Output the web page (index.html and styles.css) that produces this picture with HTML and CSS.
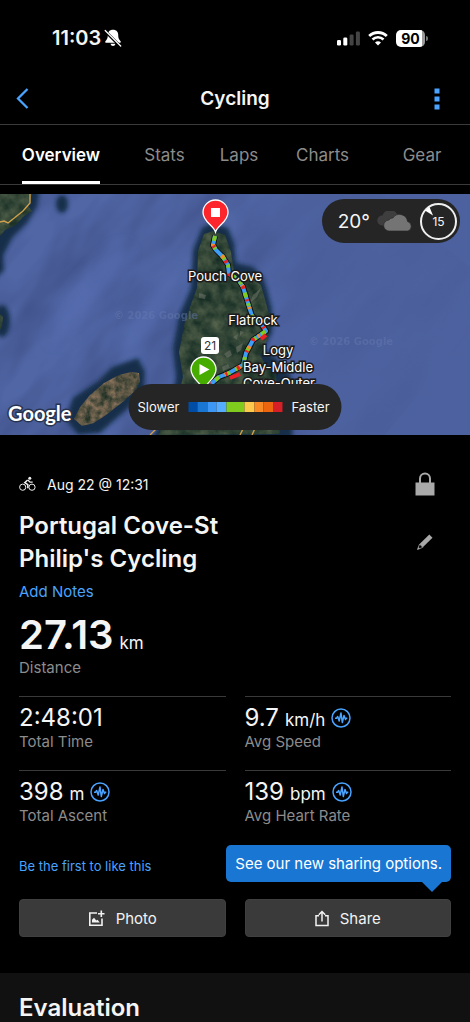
FILE: index.html
```html
<!DOCTYPE html>
<html lang="en">
<head>
  <meta charset="UTF-8">
  <meta name="viewport" content="width=device-width, initial-scale=1.0">
  <title>Cycling</title>
  <link rel="stylesheet" href="styles.css">
</head>
<body>

<div class="status-bar">
  <div class="status-left">
    <span class="clock">11:03</span>
    <svg width="18" height="18" viewBox="0 0 18 18">
      <path d="M9 .8c-3.400 0-5.200 2.200-5.200 5.200 0 3.500-.9 4.600-2.400 6.300-.4.500-.2 1.400.5 1.400h14.200c.7 0 .9-.9.5-1.400-1.500-1.700-2.400-2.800-2.400-6.300 0-3-1.800-5.200-5.200-5.200zM6.600 14.800h4.800c-.2 1.400-1.300 2.200-2.400 2.200s-2.200-.8-2.400-2.200z" fill="#fff"/>
      <path d="M.5 1.500l16 16" stroke="#000" stroke-width="3"/>
      <path d="M1.200 1.500l15.500 15.500" stroke="#fff" stroke-width="1.300" stroke-linecap="round"/>
    </svg>
  </div>
  <div class="status-right">
    <svg width="23" height="15" viewBox="0 0 23 15">
      <rect x="0" y="9" width="4" height="5.500" rx="1.300" fill="#fff"/>
      <rect x="6.300" y="6.500" width="4" height="8" rx="1.300" fill="#fff"/>
      <rect x="12.600" y="3.500" width="4" height="11" rx="1.300" fill="#444"/>
      <rect x="18.900" y="0.500" width="4" height="14" rx="1.300" fill="#444"/>
    </svg>
    <svg width="20" height="15" viewBox="0 0 20 15">
      <path d="M1.200 5.100a12.600 12.600 0 0 1 17.600 0" fill="none" stroke="#fff" stroke-width="2.800"/>
      <path d="M4.500 8.500a7.900 7.900 0 0 1 11 0" fill="none" stroke="#fff" stroke-width="2.600"/>
      <path d="M10 14.600l-3-3a4.300 4.300 0 0 1 6 0z" fill="#fff"/>
    </svg>
    <span class="battery">90</span>
  </div>
</div>

<header class="top-bar">
  <button class="icon-btn" aria-label="Back">
    <svg width="13" height="22" viewBox="0 0 13 22"><path d="M11.500 1L2 10.500l9.500 9.500" fill="none" stroke="#49a3ff" stroke-width="2.300"/></svg>
  </button>
  <h1>Cycling</h1>
  <button class="icon-btn" aria-label="More options">
    <svg width="6" height="22" viewBox="0 0 6 22"><path d="M.5.500h5v5h-5zM.5 8.500h5v5h-5zM.5 16.500h5v5h-5z" fill="#49a3ff"/></svg>
  </button>
</header>

<nav class="tabs">
  <a href="#" class="active">Overview</a>
  <a href="#">Stats</a>
  <a href="#">Laps</a>
  <a href="#">Charts</a>
  <a href="#">Gear</a>
</nav>

<div class="map">
  <svg class="map-image" viewBox="0 0 470 241" preserveAspectRatio="xMidYMid slice">
    <defs>
      <filter id="soft" x="-10%" y="-10%" width="120%" height="120%"><feGaussianBlur stdDeviation="2"/></filter>
      <filter id="swell" x="-50%" y="-50%" width="200%" height="200%"><feGaussianBlur stdDeviation="7"/></filter>
      <filter id="terrain" x="0" y="0" width="100%" height="100%" color-interpolation-filters="sRGB">
        <feTurbulence type="fractalNoise" baseFrequency="0.08" numOctaves="4" seed="7" result="noise"/>
        <feColorMatrix in="noise" type="matrix" values="0.35 0 0 0 0.02  0.3 0 0 0 0.12  0.22 0 0 0 0.1  0 0 0 0 1"/>
        <feComposite in2="SourceGraphic" operator="in"/>
      </filter>
      <filter id="dry" x="0" y="0" width="100%" height="100%" color-interpolation-filters="sRGB">
        <feTurbulence type="fractalNoise" baseFrequency="0.12" numOctaves="4" seed="3" result="noise"/>
        <feColorMatrix in="noise" type="matrix" values="0.8 0 0 0 -0.05  0.5 0 0 0 0.08  0.4 0 0 0 0.06  0 0 0 0 1"/>
        <feComposite in2="SourceGraphic" operator="in"/>
      </filter>
      <filter id="water" x="0" y="0" width="100%" height="100%" color-interpolation-filters="sRGB">
        <feTurbulence type="fractalNoise" baseFrequency="0.012 0.03" numOctaves="3" seed="11"/>
        <feColorMatrix type="matrix" values="0 0 0 0 0.2  0 0 0 0 0.25  0 0 0 0 0.45  0.9 0 0 0 -0.3"/>
      </filter>
      <linearGradient id="calm">
        <stop offset="0" stop-color="#4b609d" stop-opacity="0"/>
        <stop offset=".4" stop-color="#4b609d" stop-opacity=".8"/>
      </linearGradient>
      <path id="route" d="M215 42l-2 9 3 5 7 7 5 8 1 9 9 5 5 8 4 13 5 16 10 9 4 6-13 9-7 13-3 12-14 8-10 4-8 7"/>
    </defs>

    <rect width="470" height="241" fill="#5066a5"/>
    <g transform="rotate(-50 120 120)"><rect x="-100" y="-120" width="480" height="520" filter="url(#water)"/></g>
    <rect x="220" width="250" height="241" fill="url(#calm)"/>
    <g filter="url(#swell)" fill="#566db0" opacity=".7">
      <ellipse cx="90" cy="100" rx="14" ry="60" transform="rotate(38 90 100)"/>
      <ellipse cx="150" cy="120" rx="10" ry="50" transform="rotate(30 150 120)"/>
    </g>

    <!-- shallow water round the coast -->
    <g fill="#132f48" filter="url(#soft)">
      <path d="M-10-10H40L37 12 27 29 12 44 3 62 4 76-10 90z"/>
      <ellipse cx="62" cy="10" rx="6" ry="9"/>
      <ellipse cx="2" cy="127" rx="8" ry="16"/>
      <path d="M66 225l7-21 25-17 14-14 26-9 7 14-1 18-18 20-26 23-22 2z"/>
      <path d="M150 250l22-46 4-20-3-30 6-32 12-28 2-38 9-22 10-5 16 5 6 15 2 20 17 4 10 10 5 16 4 17v22l-8 16 16 14 10 12 4 14-2 56z"/>
    </g>

    <!-- land -->
    <g filter="url(#terrain)">
      <path d="M0 0h32l-4 12 4 5-9 6-7 8-11 5-5 6z"/>
      <path d="M0 120l3 3-1 9-2 4z"/>
      <path d="M158 241l20-38 5-20-4-25 6-31 12-33 1-37 6-17 9-3 12 4 6 17 3 19 15 5 12 9 5 18 4 15-2 20-8 17 6 11 10 10 4 58z"/>
    </g>
    <path d="M74 225l6-12 10-12 14-12 15-8 12-3 8 1 1 8-4 9-12 11-18 14-12 8-12 3z" filter="url(#dry)"/>
    <g fill="#8d8b80" opacity=".4">
      <path d="M224 160l6-4 2 5-5 3zM236 153l7-4-2 7-4 3zM222 173l6-3 2 4-7 3zM199 99l7 2-1 4-6-1zM253 101l8-7-4 9-7 6zM233 143l5-3-1 6zM240 137l4 1-4 4z"/>
    </g>
    <g fill="none" stroke="#d0a04c" stroke-width="1.400">
      <path d="M30 0v9l-7 8-15 12-4-2-4 1"/>
      <path d="M150 241l7-7M240 241l4-8M252 241l4-9"/>
    </g>

    <g class="watermark">
      <text x="114" y="125">© 2026 Google</text>
      <text x="309" y="151">© 2026 Google</text>
    </g>

    <!-- route, coloured by speed -->
    <g fill="none" stroke-linejoin="round">
      <use href="#route" class="pace-edge"/>
      <use href="#route" class="pace pace-base"/>
      <use href="#route" class="pace pace-green"/>
      <use href="#route" class="pace pace-orange"/>
      <use href="#route" class="pace pace-red"/>
      <path d="M266 141l-5 4M240 180l-10 4" stroke="#ee2027" stroke-width="4"/>
    </g>

    <g class="places">
      <text x="225" y="87">Pouch Cove</text>
      <text x="253" y="131">Flatrock</text>
      <text x="278" y="161">Logy</text>
      <text x="278" y="178">Bay-Middle</text>
      <text x="279" y="194">Cove-Outer</text>
    </g>

    <rect x="201" y="143" width="18" height="17" rx="3" fill="#fff"/>
    <text x="210" y="156" class="shield">21</text>

    <path d="M215.500 38c-2-7-12.500-10-12.500-19.500a12.500 12.500 0 0 1 25 0c0 9.500-10.500 12.500-12.500 19.500z" fill="#fc252c" stroke="#fff" stroke-width="1.300"/>
    <rect x="211" y="14" width="9" height="9" fill="#fff"/>
    <path d="M203.500 196c-2-7-12.500-11-12.500-20.500a12.500 12.500 0 0 1 25 0c0 9.500-10.500 13.500-12.500 20.500z" fill="#46ad00" stroke="#fff" stroke-width="1.300"/>
    <path d="M199.500 170v11l10-5.500z" fill="#fff"/>

    <text x="8" y="227" class="google">Google</text>
  </svg>

  <div class="weather">
    <span class="temp">20°</span>
    <svg width="36" height="20" viewBox="0 0 36 20">
      <path d="M5 14.500a5 5 0 0 1 .5-10 8 8 0 0 1 14.800-1L22 14.500z" fill="#3e3e3e"/>
      <path d="M12.500 20a5.500 5.500 0 0 1-.6-11 4.500 4.500 0 0 1 4-2 8 8 0 0 1 14.600 3.500A5 5 0 0 1 31 20z" fill="#747474" stroke="#252525" stroke-width=".6"/>
    </svg>
    <span class="wind">15
      <svg class="wind-arrow" width="9" height="9" viewBox="0 0 9 9"><path d="M0 3.500L4.500 0 8 8.500z" fill="#fff"/></svg>
    </span>
  </div>

  <div class="legend">
    <span>Slower</span>
    <span class="scale"><i></i><i></i><i></i><i></i><i></i><i></i><i></i><i></i><i></i></span>
    <span>Faster</span>
  </div>
</div>

<main class="activity">
  <div class="meta">
    <svg width="17" height="16" viewBox="0 0 17 16" fill="none" stroke="#eee">
      <circle cx="3.700" cy="11.200" r="3.100"/>
      <circle cx="13" cy="11.200" r="3.100"/>
      <circle cx="10.800" cy="2.200" r="1.500" fill="#eee" stroke="none"/>
      <path d="M8.600 4L5.800 6.600l3 2v3.700" stroke-width="1.500"/>
      <path d="M8.800 4l2.300 2.200h2.600" stroke-width="1.300"/>
    </svg>
    <span class="date">Aug 22 @ 12:31</span>
    <button class="icon-btn" aria-label="Privacy">
      <svg width="20" height="24" viewBox="0 0 20 24"><path d="M5 11V6.500a5 5 0 0 1 10 0V11" fill="none" stroke="#a9a9a9" stroke-width="2"/><path d="M.5 10.500h19v13H.5z" fill="#a9a9a9"/></svg>
    </button>
  </div>

  <div class="title-row">
    <h2>Portugal Cove-St Philip's Cycling</h2>
    <button class="icon-btn" aria-label="Edit name">
      <svg width="16" height="16" viewBox="0 0 16 16"><path d="M12.300.5l3.200 3.200-9.700 9.600-3.200-3.200z" fill="#a9a9a9"/><path d="M2.600 10.100L.5 15.500l5.300-2.200z" fill="none" stroke="#a9a9a9" stroke-width=".8"/><path d="M.5 15.500l1-2.600 1.500 1.500z" fill="#a9a9a9"/></svg>
    </button>
  </div>
  <a href="#" class="notes">Add Notes</a>

  <div class="distance">
    <div class="total"><strong>27.13</strong> <small>km</small></div>
    <p>Distance</p>
  </div>

  <div class="stats">
    <div class="stat">
      <div class="value">2:48:01</div>
      <p>Total Time</p>
    </div>
    <div class="stat">
      <div class="value">9.7 <small>km/h</small>
        <svg class="pulse" viewBox="0 0 20 20"><circle cx="10" cy="10" r="9"/><path d="M4 10.200h1.500l1.200-1.700 1.500 4.500 1.800-8 1.300 9.500 1.700-7 1.500 4 .8-1.300h1"/></svg>
      </div>
      <p>Avg Speed</p>
    </div>
    <div class="stat">
      <div class="value">398 <small>m</small>
        <svg class="pulse" viewBox="0 0 20 20"><circle cx="10" cy="10" r="9"/><path d="M4 10.200h1.500l1.200-1.700 1.500 4.500 1.800-8 1.300 9.500 1.700-7 1.500 4 .8-1.300h1"/></svg>
      </div>
      <p>Total Ascent</p>
    </div>
    <div class="stat">
      <div class="value">139 <small>bpm</small>
        <svg class="pulse" viewBox="0 0 20 20"><circle cx="10" cy="10" r="9"/><path d="M4 10.200h1.500l1.200-1.700 1.500 4.500 1.800-8 1.300 9.500 1.700-7 1.500 4 .8-1.300h1"/></svg>
      </div>
      <p>Avg Heart Rate</p>
    </div>
  </div>

  <div class="social">
    <a href="#" class="like">Be the first to like this</a>
    <div class="tooltip">See our new sharing options.</div>
  </div>

  <div class="actions">
    <button>
      <svg width="17" height="17" viewBox="0 0 17 17" fill="none" stroke="#f2f2f2" stroke-width="1.600">
        <path d="M9 3H1.800v12.200H14V8.500"/>
        <path d="M13.300.5v6.400M10 3.700h6.500"/>
        <path d="M4 12.600V9.800l2-2 2.300 2.800 1.200-.8 2.300 2.800z" fill="#f2f2f2" stroke="none"/>
      </svg>
      Photo
    </button>
    <button>
      <svg width="14" height="17" viewBox="0 0 14 17" fill="none" stroke="#f2f2f2" stroke-width="1.500">
        <path d="M4 5.800H1v9.700h12V5.800h-3"/>
        <path d="M7 11.500V2M3.800 4.800L7 1.500l3.200 3.300"/>
      </svg>
      Share
    </button>
  </div>
</main>

<section class="evaluation">
  <h2>Evaluation</h2>
</section>

</body>
</html>
```
FILE: styles.css
```css
* {
  box-sizing: border-box;
}

body {
  margin: 0;
  background-color: #000;
  color: #f5f5f5;
  font-family: Inter, "Liberation Sans", sans-serif;
  font-size: 15px;
}

h1, h2, p {
  margin: 0;
}

h2 {
  font-size: 24px;
  font-weight: 600;
  line-height: 33px;
}

a {
  color: #49a3ff;
  text-decoration: none;
}

svg {
  display: block;
  flex: none;
}

.icon-btn {
  display: flex;
  padding: 0;
  border: none;
  background: none;
  cursor: pointer;
}

/* Status bar */
.status-bar {
  display: flex;
  justify-content: space-between;
  align-items: center;
  height: 76px;
  padding: 0 42px 0 52px;
}

.status-left,
.status-right {
  display: flex;
  align-items: center;
}

.status-left {
  gap: 3px;
}

.status-right {
  gap: 8px;
}

.clock {
  font-size: 20px;
  font-weight: 600;
}

.battery {
  position: relative;
  width: 29px;
  margin-right: 3px;
  border-radius: 5px;
  background: linear-gradient(90deg, #fff 90%, #999 90%);
  color: #000;
  font-size: 14px;
  font-weight: 700;
  line-height: 17px;
  text-align: center;
}

.battery::after {
  content: "";
  position: absolute;
  top: 6px;
  right: -3px;
  width: 2px;
  height: 5px;
  border-radius: 0 2px 2px 0;
  background-color: #777;
}

/* Header */
.top-bar {
  display: grid;
  grid-template-columns: 1fr auto 1fr;
  align-items: center;
  height: 49px;
  padding: 0 16px 3px;
  border-bottom: 1px solid #3a3a3a;
}

.top-bar h1 {
  font-size: 19px;
  font-weight: 600;
  line-height: 24px;
}

.top-bar .icon-btn:last-child {
  justify-self: end;
  margin-right: 14px;
}

.tabs {
  display: grid;
  grid-template-columns: 122fr 85fr 64fr 103fr 96fr;
  justify-items: center;
  height: 60px;
  border-bottom: 1px solid #3a3a3a;
}

.tabs a {
  height: 59px;
  color: #8c8c8c;
  font-size: 17px;
  line-height: 61px;
}

.tabs .active {
  border-bottom: 3px solid #fff;
  color: #fff;
  font-weight: 600;
}

/* Map */
.map {
  position: relative;
  margin-top: 9px;
  overflow: hidden;
}

.map-image {
  width: 100%;
  height: auto;
}

.places text {
  fill: #fff;
  stroke: #1b1b1b;
  stroke-width: 3px;
  paint-order: stroke;
  font-size: 13px;
  text-anchor: middle;
}

.watermark text {
  fill: #6478ae;
  opacity: 0.5;
  font-family: "DejaVu Sans", sans-serif;
  font-size: 10px;
  font-weight: 700;
}

.shield {
  fill: #333;
  font-size: 12px;
  text-anchor: middle;
}

.google {
  fill: #fff;
  stroke: #26344f;
  stroke-width: 3px;
  paint-order: stroke;
  font-family: Lato, sans-serif;
  font-size: 20px;
  font-weight: 700;
}

.pace-edge {
  stroke: #111;
  stroke-width: 6px;
}

.pace {
  stroke-width: 4px;
}

.pace-base {
  stroke: #3d9cf5;
}

.pace-green {
  stroke: #7fcc1f;
  stroke-dasharray: 5 6 3 9;
}

.pace-orange {
  stroke: #f98b26;
  stroke-dasharray: 2 13 3 20;
  stroke-dashoffset: -8px;
}

.pace-red {
  stroke: #e52328;
  stroke-dasharray: 2 17 3 11;
  stroke-dashoffset: -10px;
}

.weather,
.legend {
  position: absolute;
  display: flex;
  align-items: center;
  background-color: #252525;
}

.weather {
  top: 5px;
  right: 10px;
  gap: 7px;
  height: 44px;
  padding: 0 3px 0 16px;
  border-radius: 22px;
}

.temp {
  font-size: 19px;
}

.wind {
  position: relative;
  width: 37px;
  border: 2px solid #eee;
  border-radius: 50%;
  font-size: 12px;
  line-height: 33px;
  text-align: center;
}

.wind-arrow {
  position: absolute;
  top: 2px;
  left: 3px;
}

.legend {
  bottom: 5px;
  left: 50%;
  transform: translateX(-50%);
  gap: 9px;
  height: 46px;
  padding: 0 12px 0 9px;
  border-radius: 23px;
  font-size: 13px;
}

.scale {
  display: grid;
  grid-template-columns: 1fr 1fr 1fr 1fr 2fr 1fr 1fr 1fr 1fr;
  width: 94px;
  height: 10px;
}

.scale i:nth-child(1) { background-color: #004da5; }
.scale i:nth-child(2) { background-color: #1976d2; }
.scale i:nth-child(3) { background-color: #3d97f5; }
.scale i:nth-child(4) { background-color: #56adff; }
.scale i:nth-child(5) { background-color: #7fcc1f; }
.scale i:nth-child(6) { background-color: #fbc94c; }
.scale i:nth-child(7) { background-color: #f98b26; }
.scale i:nth-child(8) { background-color: #ed660f; }
.scale i:nth-child(9) { background-color: #d61f26; }

/* Activity */
.activity {
  padding: 36px 19px;
}

.meta {
  display: flex;
  align-items: center;
  gap: 11px;
  height: 26px;
}

.date {
  flex: 1;
  font-size: 14px;
}

.meta .icon-btn,
.title-row .icon-btn {
  justify-content: center;
  width: 20px;
  margin-right: 16px;
}

.title-row {
  display: flex;
  justify-content: space-between;
  align-items: center;
  margin-top: 12px;
}

.title-row h2 {
  max-width: 240px;
}

.notes {
  display: block;
  margin-top: 6px;
  line-height: 22px;
}

.distance {
  margin-top: 9px;
}

.total,
.value {
  display: flex;
  align-items: baseline;
  gap: 6px;
}

.total {
  height: 46px;
  line-height: 46px;
}

.total strong {
  font-size: 40px;
  font-weight: 600;
}

.total small,
.value small {
  font-size: 17px;
  line-height: 20px;
}

.distance p,
.stat p {
  color: #8c8c8c;
  line-height: 20px;
}

.stats {
  display: grid;
  grid-template-columns: 1fr 1fr;
  column-gap: 19px;
  margin-top: 18px;
}

.stat {
  height: 74px;
  padding-top: 6px;
  border-top: 1px solid #3a3a3a;
}

.value {
  height: 29px;
  font-size: 24px;
  line-height: 29px;
}

.pulse {
  align-self: center;
  width: 20px;
  height: 20px;
  fill: none;
  stroke: #49a3ff;
  stroke-width: 1.5px;
  stroke-linejoin: round;
}

.social {
  display: flex;
  justify-content: space-between;
  align-items: flex-end;
  margin-top: 1px;
}

.like {
  font-size: 13px;
  line-height: 32px;
}

.tooltip {
  position: relative;
  padding: 0 9px;
  border-radius: 5px;
  background-color: #1976d2;
  line-height: 37px;
  color: #fff;
}

.tooltip::after {
  content: "";
  position: absolute;
  top: 100%;
  right: 9px;
  border: 10px solid transparent;
  border-top-color: #1976d2;
  border-bottom: none;
}

.actions {
  display: grid;
  grid-template-columns: 1fr 1fr;
  gap: 19px;
  margin-top: 17px;
}

.actions button {
  display: flex;
  justify-content: center;
  align-items: center;
  gap: 11px;
  height: 38px;
  padding: 0;
  border: 1px solid #404040;
  border-radius: 4px;
  background-color: #3a3a3a;
  color: #f2f2f2;
  font-family: inherit;
  font-size: 15px;
  cursor: pointer;
}

.evaluation {
  padding: 18px 19px 0;
  background-color: #111;
}
```
